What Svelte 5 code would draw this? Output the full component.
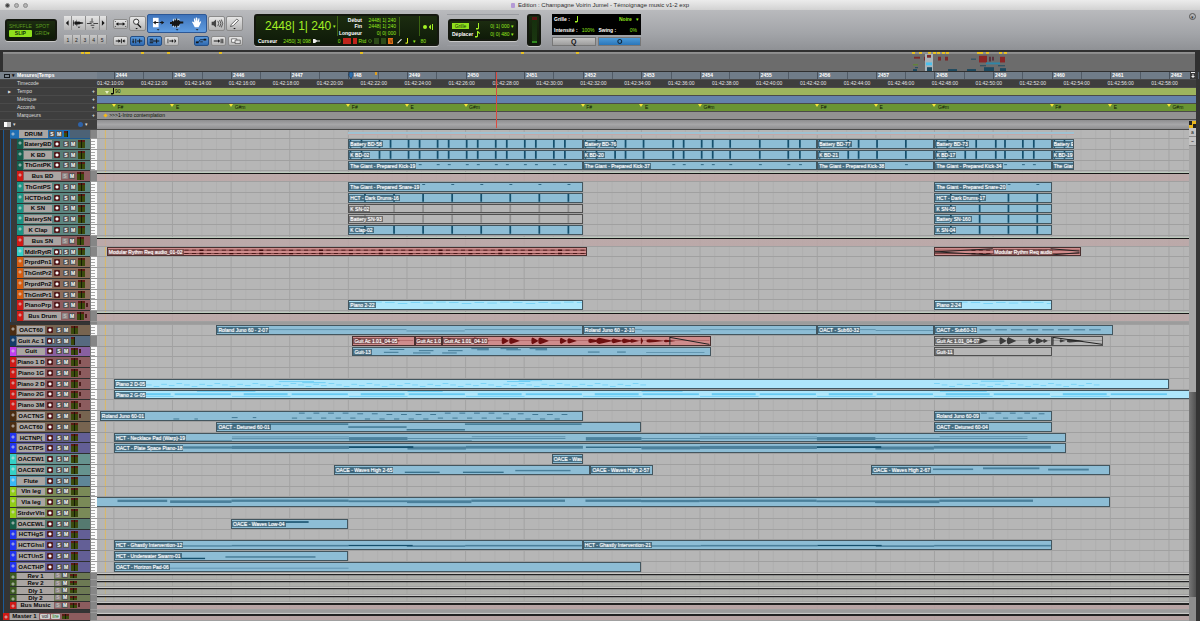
<script>
  // Horizontal positions are counted in bars from bar 2444.
  const FIRST = -0.288;
  const SPAN = 18.63;

  const pct = (bar) => ((bar - FIRST) / SPAN) * 100;

  const bars = Array.from({ length: 19 }, (_, i) => i);
  const timecodes = Array.from({ length: 25 }, (_, i) => 10 + i * 2);
  const quarters = Array.from({ length: 76 }, (_, i) => i - 1);

  const chords = [
    [0, 'F#'], [1, 'E'], [2, 'G#m'], [4, 'F#'], [5, 'E'], [6, 'G#m'], [8, 'F#'], [9, 'E'],
    [10, 'G#m'], [12, 'F#'], [13, 'E'], [14, 'G#m'], [16, 'F#'], [17, 'E'], [18, 'G#m'],
  ];

  const teal = ['#135f4d', '#577c76'];
  const aqua = ['#1b9484', '#5c8680'];
  const cyan = ['#35cfc6', '#66938f'];
  const red = ['#d01a16', '#8c5c5e'];
  const orange = ['#d55c10', '#8a6c5a'];
  const brown = ['#4c2d12', '#776450'];
  const navy = ['#143c68', '#566a80'];
  const violet = ['#c240f0', '#8860a0'];
  const blue = ['#2234f0', '#635f96'];
  const sky = ['#38b8f6', '#5f8698'];
  const lime = ['#92ce18', '#7a8a58'];
  const forest = ['#155f48', '#557a70'];
  const olive = ['#3c5a22', '#6d7a54'];

  const hits = (list, y = 0, h = 10) => list.map((b) => [b, b + (h < 10 ? 0.05 : 0.03), y, h]);

  function every(from, to, offsets) {
    const out = [];
    for (let b = from; b < to; b++) for (const o of offsets) if (b + o < to) out.push(b + o);
    return out;
  }

  const kickA = every(4, 8, [0.01, 0.2, 0.51, 0.7]);
  const kickB = [0.01, 0.2, 0.52, 0.7, 1.01, 1.52, 1.7, 2.01, 2.2, 2.5, 3.01, 3.5, 3.7].map((b) => b + 8);
  const kickC = [12.01, 12.51, 12.69, 13.01, 13.51];
  const kickD = [0.01, 0.2, 0.51, 0.7, 1.04, 1.2, 1.51, 1.7].map((b) => b + 14);
  const kickE = [16.01, 16.2];
  const snareA = every(4, 8, [0.26, 0.76]);
  const snareB = every(14, 16, [0.26, 0.76]);

  const clip = (start, end, name, notes = [], kind = 'midi', extra = {}) =>
    ({ start, end, name, notes, kind, ...extra });

  const kicks = (names, y, h) => [
    clip(4, 8, names[0], hits(kickA, y, h)),
    clip(8, 12, names[1], hits(kickB, y, h)),
    clip(12, 14, names[2], hits(kickC, y, h)),
    clip(14, 16, names[3], hits(kickD, y, h)),
    clip(16, 16.38, names[4], hits(kickE, y, h)),
  ];

  // Small pseudo-random phrase of short notes
  function phrase(from, to, step, base, range) {
    const out = [];
    let i = 0;
    for (let b = from; b < to; b += step) {
      const y = base + ((i * 7) % 5) * (range / 5);
      out.push([b, b + step * 0.75, y, 0.8]);
      i++;
    }
    return out;
  }

  function junoSteps(from, to) {
    const out = [];
    const top = [1, 1, 1, 1, 2, 2, 2.6, 3, 3, 3];
    for (let i = 0; from + i * 0.25 < to; i++) {
      const b = from + i * 0.25;
      out.push([b, b + 0.1, top[i % 10], 0.8], [b - 0.12, b - 0.03, i % 10 < 5 ? 7.4 : 8.6, 0.8]);
    }
    return out;
  }

  const pad = (s) => [
    [s, s + 2, 3.4, 0.8], [s, s + 2, 5.6, 1], [s + 2, s + 3, 4, 4.4], [s + 3, s + 4.1, 5.4, 1],
    [s + 3, s + 4.1, 8, 0.8], [s + 4.1, s + 5.7, 3.2, 0.8], [s + 4.1, s + 5.7, 5.4, 1],
  ];
  const soft = (s) => [
    [s, s + 2, 2.4, 4], [s + 2, s + 3.1, 2.8, 2.4, 1], [s + 3, s + 4, 3.2, 4], [s + 4, s + 6, 2.4, 3.6],
  ];
  const ghost = (s) => [
    [s, s + 2, 5, 2], [s + 2, s + 3.1, 5, 1.6, 1], [s + 3, s + 4, 5.6, 2], [s + 4, s + 6, 5, 2],
  ];
  const viola = (s) => [
    [s, s + 2, 2, 3], [s + 2, s + 3, 3, 2.4], [s + 3, s + 4.1, 3, 3.6], [s + 4.1, s + 5.7, 2, 3],
  ];
  const pianoBands = [[1.4, 2.4, 0.2, 1], [5, 5.6, 0.2, 1], [9, 9.7, 0.2, 1], [14.1, 14.9, 0.2, 1]];
  for (let b = 0; b < 18; b += 2) {
    pianoBands.push([b + 0.2, b + 0.95, 2.8, 2.6], [b + 1.02, b + 1.98, 3, 2.2], [b, b + 1, 6.8, 0.8]);
  }

  const tracks = [
    { type: 'fold', name: 'DRUM' },
    { name: 'BateryBD', c: teal, in: 1, clips: kicks(['Battery BD-58', 'Battery BD-76', 'Battery BD-77', 'Battery BD-73', 'Battery E'], 0, 10) },
    { name: 'K BD', c: teal, in: 1, clips: kicks(['K BD-02', 'K BD-20', 'K BD-21', 'K BD-17', 'K BD-19'], 0, 10) },
    { name: 'ThGntPK', c: teal, in: 1, clips: kicks(['The Giant - Prepared Kick-19', 'The Giant - Prepared Kick-37', 'The Giant - Prepared Kick-38', 'The Giant - Prepared Kick-34', 'The Giar'], 3, 1) },
    { type: 'bus', name: 'Bus BD', c: red, in: 1 },
    { name: 'ThGntPS', c: aqua, in: 1, clips: [clip(4, 8, 'The Giant - Prepared Snare-19', hits(snareA, 1.4, 1)), clip(14, 16, 'The Giant - Prepared Snare-20', hits(snareB, 1.4, 1))] },
    { name: 'HCTDrkD', c: aqua, in: 1, clips: [clip(4, 8, 'HCT - Dark Drums-16', hits(snareA)), clip(14, 16, 'HCT - Dark Drums-17', hits(snareB))] },
    { name: 'K SN', c: aqua, in: 1, clips: [clip(4, 8, 'K SN-02', hits(snareA), 'muted'), clip(14, 16, 'K SN-05', hits(snareB))] },
    { name: 'BaterySN', c: aqua, in: 1, clips: [clip(4, 8, 'Battery SN-93', hits(snareA), 'muted'), clip(14, 16, 'Battery SN-160', hits(snareB))] },
    { name: 'K Clap', c: aqua, in: 1, clips: [clip(4, 8, 'K Clap-02', hits(snareA)), clip(14, 16, 'K SN-04', hits(snareB))] },
    { type: 'bus', name: 'Bus SN', c: red, in: 1 },
    { name: 'MdlrRytR', c: cyan, in: 1, audio: true, clips: [
      clip(-0.12, 8.08, 'Modular Rythm Req audio_01-02', [], 'audio', { loop: [-0.12, 8.08] }),
      clip(14, 16.5, 'Modular Rythm Req audio', [], 'audio', { loop: [14.6, 16.1], cross: true, center: true }),
    ] },
    { name: 'PrprdPn1', c: orange, in: 1 },
    { name: 'ThGntPr2', c: orange, in: 1 },
    { name: 'PrprdPn2', c: orange, in: 1 },
    { name: 'ThGntPr1', c: orange, in: 1 },
    { name: 'PianoPrp', c: red, in: 1, send: true, clips: [clip(4, 8, 'Piano 2-22', phrase(4.4, 8, 0.22, 1, 2), 'bright'), clip(14, 16, 'Piano 2-24', phrase(14.4, 16, 0.22, 1, 2), 'bright')] },
    { type: 'bus', name: 'Bus Drum', c: red, in: 1, send: true },
    { type: 'gap' },
    { name: 'OACT60', c: brown, clips: [
      clip(1.75, 8, 'Roland Juno 60 - 2-07', [[2, 4, 4.4, 0.8], [4, 5, 4.4, 0.8], [5, 6, 6, 0.8], [6, 8, 4.4, 0.8]]),
      clip(8, 12, 'Roland Juno 60 - 2-10', [[8, 9, 4.4, 0.8], [9, 10, 6, 0.8], [10, 12, 4.4, 0.8]]),
      clip(12, 14, 'OACT - Sub60-32', [[12, 13, 4.4, 0.8], [13, 14, 5.6, 0.8]]),
      clip(14, 17.05, 'OACT - Sub60-31', [0, 1, 2, 3, 4, 5, 6, 7, 8].map((i) => [14.5 + i * 0.27, 14.7 + i * 0.27, 4.6, 0.8])),
    ] },
    { name: 'Guit Ac 1', c: navy, audio: true, clips: [
      clip(4.07, 5.13, 'Guit Ac 1.01_04-05', [], 'audio', { bursts: [[4.1, 0.25, 4], [4.6, 0.3, 4]] }),
      clip(5.13, 5.6, 'Guit Ac 1.0', [], 'audio', { bursts: [[5.14, 0.3, 4]] }),
      clip(5.6, 10.18, 'Guit Ac 1.01_04-10', [], 'audio', {
        bursts: [[5.64, 0.3, 4], [6.1, 0.3, 4.4], [6.61, 0.12, 4.4], [6.74, 0.18, 4], [7.12, 0.12, 4.4], [7.24, 0.18, 4.4], [7.61, 0.12, 4], [7.74, 0.16, 3.4], [8.1, 0.2, 2.8], [8.24, 0.28, 4], [8.5, 0.2, 3], [8.68, 0.2, 3], [8.82, 0.15, 2.4], [9.0, 0.04, 4.6], [9.1, 0.3, 2.2], [9.4, 0.2, 1.6]],
        fade: 9.5,
      }),
      clip(14, 16, 'Guit Ac 1.01_04-07', [], 'muted', { bursts: [[14.1, 0.25, 4], [14.62, 0.12, 4], [14.74, 0.18, 4], [15.12, 0.12, 4.6], [15.25, 0.16, 4.6], [15.62, 0.12, 4.2], [15.75, 0.14, 4], [15.88, 0.08, 2.6]] }),
      clip(16, 16.88, '', [], 'muted', { bursts: [[16.12, 0.1, 2], [16.25, 0.3, 2.2]], fade: 16 }),
    ] },
    { name: 'Guit', c: violet, send: true, clips: [
      clip(4.07, 10.18, 'Guit-13', [[4.6, 4.85, 5, 0.8], [4.7, 4.95, 1.6, 0.8], [5.1, 5.4, 6, 0.8], [5.2, 5.45, 3.2, 0.8], [5.6, 5.85, 6, 0.8], [5.7, 5.95, 3.2, 0.8], [6.1, 6.4, 0.6, 0.8], [6.2, 6.4, 2, 0.8], [6.6, 6.9, 0.6, 0.8], [6.7, 6.95, 2, 0.8], [7.1, 7.4, 0.6, 0.8], [7.2, 7.4, 2, 0.8], [8.1, 8.3, 4.8, 0.8], [8.6, 8.75, 4.8, 0.8], [9.1, 10.1, 5.6, 0.8]]),
      clip(14, 16, 'Guit-11', [], 'muted'),
    ] },
    { name: 'Piano 1 D', c: red, send: true },
    { name: 'Piano 1G', c: red, send: true },
    { name: 'Piano 2 D', c: red, send: true, clips: [clip(0, 18, 'Piano 2 D-05', [...phrase(0.4, 9, 0.13, 4, 5), [2.8, 3.4, 1.6, 1], [3.2, 3.6, 3, 1], [6.7, 7.1, 1.4, 1], [6.9, 7.3, 0.6, 0.8], ...phrase(14, 16.8, 0.13, 4, 5), [14.8, 15.2, 1, 1]], 'bright')] },
    { name: 'Piano 2G', c: red, send: true, clips: [clip(0, 18.4, 'Piano 2 G-05', pianoBands, 'bright')] },
    { name: 'Piano 3M', c: red, send: true },
    { name: 'OACTNS', c: brown, send: true, clips: [
      clip(-0.24, 8, 'Roland Juno 60-01', [[1, 1.1, 8.6, 0.8], [1.36, 1.42, 8.6, 0.8], [2, 2.1, 7, 0.8], [2.36, 2.42, 7, 0.8], ...junoSteps(3.15, 7.9)]),
      clip(14, 16, 'Roland Juno 60-09', junoSteps(14.8, 15.9)),
    ] },
    { name: 'OACT60', c: brown, clips: [
      clip(1.75, 9, 'OACT - Detuned 60-01', [[2, 4, 0.8, 1.2, 1], [4, 5, 4.6, 1.2, 1], [5, 6, 8.2, 1.2, 1], [6, 8, 0.8, 1.2, 1]]),
      clip(14, 16, 'OACT - Detuned 60-04', []),
    ] },
    { name: 'HCTNP(', c: blue, clips: [clip(0, 16.25, 'HCT - Necklace Pad (Warp)-19', [[0, 2, 8, 0.8], ...pad(2), [8.05, 9, 4, 4.4], [9, 10, 5.4, 1], [9, 10, 8, 1], ...pad(10).slice(0, 5), [14.1, 15.6, 3.2, 0.8], [14.1, 15.6, 5.4, 1]])] },
    { name: 'OACTPS', c: blue, clips: [clip(0, 16.25, 'OACT - Plate Space Piano-18', [[0, 2, 3, 3], ...soft(2), [8.05, 9, 3.4, 1.4, 1], [9, 10, 3, 4], ...soft(10)])] },
    { name: 'OACEW1', c: cyan, clips: [clip(7.47, 8, 'OACE - Wav', [])] },
    { name: 'OACEW2', c: cyan, clips: [
      clip(3.75, 8.13, 'OACE - Waves High 2-65', [[4, 4.5, 7, 1.2], [4.95, 5.55, 7.4, 1.2, 1], [5.95, 6.65, 7.4, 1.2, 1], [6.85, 7.8, 5, 1.8]]),
      clip(8.13, 9.19, 'OACE - Waves High 2-57', []),
      clip(12.92, 17, 'OACE - Waves High 2-67', [[13.97, 14.66, 3.2, 2], [14.83, 15.8, 1.8, 2.4], [15.95, 16.65, 3.4, 2.4]]),
    ] },
    { name: 'Flute', c: sky },
    { name: 'Vln leg', c: lime },
    { name: 'Vla leg', c: lime, clips: [clip(-0.3, 17, '', [[0.05, 0.9, 2.2, 3], [0.95, 2, 3, 3.4], ...viola(2), [8.05, 9, 2, 3], [9, 10, 2.4, 3], ...viola(10)])] },
    { name: 'StrdvrVln', c: lime },
    { name: 'OACEWL', c: forest, clips: [clip(2, 4, 'OACE - Waves Low-04', [[2.4, 3.33, 1.6, 2, 1]])] },
    { name: 'HCTHgS', c: blue },
    { name: 'HCTGhsl', c: blue, clips: [
      clip(0, 8, 'HCT - Ghastly Intervention-12', [[0, 2, 5.6, 1.6], ...ghost(2)]),
      clip(8, 16, 'HCT - Ghastly Intervention-21', [[8, 10, 5.6, 1.6], ...ghost(10)]),
    ] },
    { name: 'HCTUnS', c: blue, clips: [clip(0, 4, 'HCT - Underwater Swarm-01', [[1, 1.55, 7.4, 1.8, 1], [1.9, 3.45, 5.4, 2]])] },
    { name: 'OACTHP', c: blue, clips: [clip(0, 9, 'OACT - Horizon Pad-06', [[0, 4, 6.2, 0.8]])] },
    { type: 'aux', name: 'Rev 1', c: olive },
    { type: 'aux', name: 'Rev 2', c: olive },
    { type: 'aux', name: 'Dly 1', c: olive },
    { type: 'aux', name: 'Dly 2', c: olive },
    { type: 'aux', name: 'Bus Music', c: red, pink: true, send: true },
    { type: 'gap' },
    { type: 'master', name: 'Master 1', c: red, pink: true },
  ];

  // Row shares of the free height
  const share = { fold: 90, gap: 30, aux: 74, master: 85 };
  const rows = tracks.map((t) => `minmax(0, ${share[t.type] ?? 108}fr)`).join(' ');

  function wavePath(bursts) {
    return bursts
      .map(([s, len, a]) => `M${s} ${5 - a * 0.6}L${s + len * 0.15} ${5 - a}L${s + len * 0.5} ${5 - a * 0.6}L${s + len} 4.8V5.2L${s + len * 0.5} ${5 + a * 0.6}L${s + len * 0.15} ${5 + a}L${s} ${5 + a * 0.6}Z`)
      .join('');
  }

  function loopPath([from, to]) {
    let d = '';
    let i = 0;
    for (let b = from + 0.03; b < to - 0.08; b += 0.128) {
      const a = [1.4, 0.9, 1.1, 0.9, 2, 0.9, 1.1, 0.9][i++ % 8];
      for (const y of [2.8, 7.2]) d += `M${b} ${y - a / 2}h.07v${a}h-.07z`;
    }
    return d;
  }

  let mode = $state('SLIP');

  const overviewDots = [82, 86, 88, 142, 168, 220, 361, 522, 577, 913, 920, 929, 934, 938, 943, 947, 978, 981, 987, 1000, 1005];
  const overviewClips = [
    [914, 5, 6, 2, '#7a2b2b'], [924, 5, 3, 4, '#7a2b2b'], [938, 5, 3, 4, '#7a2b2b'], [945, 5, 3, 4, '#7a2b2b'],
    [913, 13, 5, 1, '#5f8f22'], [915, 16, 3, 1, '#1d4a60'], [913, 18, 4, 2, '#1d4a60'],
    [925, 2, 8, 18, '#a9b3b8'], [927, 3, 4, 3, '#7a2b2b'], [926, 11, 6, 3, '#49c2f0'], [927, 16, 5, 4, '#1d4a60'],
    [948, 18, 9, 2, '#1d4a60'], [967, 18, 9, 2, '#1d4a60'], [971, 7, 5, 1, '#1d4a60'],
    [979, 4, 8, 7, '#8a2727'], [989, 5, 2, 5, '#5a3440'], [992, 5, 2, 4, '#5a3440'], [1000, 5, 5, 6, '#8a2727'],
    [986, 11, 14, 2, '#2e86a8'], [980, 14, 6, 1, '#1d4a60'], [984, 16, 10, 4, '#1d4a60'], [998, 14, 7, 1, '#1d4a60'], [1000, 17, 6, 3, '#1d4a60'],
  ];
</script>

<div class="window">
  <header class="titlebar">
    <span class="lights"><i></i><i></i><i></i></span>
    <span class="title"><i class="doc"></i>Edition : Champagne Voirin Jumel - Témoignage music v1-2 exp</span>
  </header>

  <div class="toolbar">
    <div class="lcd modes">
      {#each ['SHUFFLE', 'SPOT', 'SLIP', 'GRID'] as m}
        <button class:on={mode === m} onclick={() => (mode = m)}>{m}{#if m === 'GRID'}<small> ▾</small>{/if}</button>
      {/each}
    </div>

    <div class="zoom">
      <div class="segs">
        <button class="narrow" aria-label="Zoom out"><svg viewBox="0 0 7 14"><path d="M5 4v6L2 7z" /></svg></button>
        <button aria-label="Zoom audio"><svg viewBox="0 0 14 14"><path d="M1 6.5h2V5h1v1.5L5 3v3l1-1v1l2-1v1l4 .5v1L8 8v1L6 8v2L5 8v3L4 8v1H3V7.500H1zM1 4h.8v6H1zM6 11h3l-1.500 1.500z" /></svg></button>
        <button aria-label="Zoom MIDI"><svg viewBox="0 0 14 14"><path d="M6 2h1v3H6zM4 5.500h4v1H4zM1 7h5v1H1zM8 7h5v1H8zM5 9h4v1H5zM6 11.500h3L7.500 13z" opacity=".75" /></svg></button>
        <button class="narrow" aria-label="Zoom in"><svg viewBox="0 0 7 14"><path d="M2 4v6l3-3z" /></svg></button>
      </div>
      <div class="segs presets">
        {#each [1, 2, 3, 4, 5] as n}<button>{n}</button>{/each}
      </div>
    </div>

    <div class="tools">
      <div class="tool-row">
        <button class="btn small" aria-label="Zoom toggle"><svg viewBox="0 0 15 9"><path d="M2 4.500l3-2v1.500h5V2.500l3 2-3 2V5H5v1.500zM1 1h1v1H1zM13 1h1v1h-1zM1 7h1v1H1zM13 7h1v1h-1z" /></svg></button>
        <button class="btn big" aria-label="Zoomer"><svg viewBox="0 0 17 14"><circle cx="7" cy="5" r="3" fill="#eee" stroke="#222" /><path d="M9 7l4 4-1 1-4-4zM6 12h3l-1.500 1.500z" /></svg></button>
        <div class="smart">
          <button aria-label="Trim"><svg viewBox="0 0 20 18"><path d="M5 3h6v10H5z" fill="#fff" /><path d="M5 8l3-2v1.500h3v1H8V10zM12 7.500h2V6l3 2-3 2V8.500h-2zM9 15h3l-1.500 1.500z" /></svg></button>
          <button aria-label="Select"><svg viewBox="0 0 20 18"><path d="M6 4h7v9H6z" fill="#b9d4ee" /><path d="M3 7.500h2V6l2 1 1-3 1 2 1-3 1 3 1-1 1 1 1 1h3v2h-3l-1 1-1 2-1-1-1 3-1-3-1 2-1-2-2 1V9.500H3zM9 15h3l-1.500 1.500z" /></svg></button>
          <button aria-label="Grab"><svg viewBox="0 0 20 18"><path d="M6 9l-1-1.500 1-.5 1.500 1L7 4l1-.5L9 7V3l1-.3.6.5L11 7l1-3.500 1 .3L12.600 8l1.400-1.500.8.6L13 11l-1 2H8z" fill="#fff" /><path d="M9 15h3l-1.500 1.500z" /></svg></button>
        </div>
        <button class="btn big" aria-label="Scrub"><svg viewBox="0 0 17 14"><path d="M3 5h2l3-2.500v9L5 9H3z" fill="#444" /><path d="M10 4q2 3 0 6M12 3q3 4 0 8M14 2.500q3 4.500 0 9" fill="none" stroke="#444" /></svg></button>
        <button class="btn big" aria-label="Pencil"><svg viewBox="0 0 17 14"><path d="M4 10.500L5 8l6-6 2 1.500-6 6z" fill="#fff" stroke="#333" stroke-width=".8" /><path d="M7 12h3l-1.500 1.500z" /></svg></button>
      </div>
      <div class="tool-row low">
        <button class="btn small" aria-label="Tab to transient"><svg viewBox="0 0 15 9"><path d="M2 4h3V2.500L8 4.500l-3 2V5H2zM8 2h1v5H8zM13 4h-1V2.500L9.500 4.500l2.500 2V5h1z" /></svg></button>
        <button class="btn small active" aria-label="Link timeline"><svg viewBox="0 0 15 9"><path d="M2 2h1v3h1L2.500 7 1 5h1zM5 2h1v5H5zM7 4h6v1H7zM9.500 2h1v5h-1z" /></svg></button>
        <button class="btn small active" aria-label="Link track"><svg viewBox="0 0 15 9"><path d="M2 2h4v1H2zM2 4h11v1H2zM2 6h4v1H2zM9.500 2h1v5h-1z" /></svg></button>
        <button class="btn small" aria-label="Mirror"><svg viewBox="0 0 15 9"><path d="M3 2h.8v5H3zM5 4h3V2.500l2 2-2 2V5H5zM11 2l2 2.500L11 7z" /></svg></button>
        <button class="btn small active push" aria-label="Automation follows"><svg viewBox="0 0 15 9"><path d="M2 6h2l2-3h5" fill="none" stroke="#0b2540" /><path d="M10 2h3v2h-3zM1 5h3v2H1zM6 5h3v1H6z" /></svg></button>
        <button class="btn small" aria-label="Insertion"><svg viewBox="0 0 15 9"><path d="M2 4h6v1H2zM7 2.500l2.500 2L7 6.500zM10 2h1v5h-1zM12 2h1v5h-1z" /></svg></button>
        <button class="btn small" aria-label="Layered"><svg viewBox="0 0 15 9"><path d="M3 2h6v4H3z" fill="#fff" stroke="#333" stroke-width=".7" /><path d="M7 3.500h6v4H7z" fill="#ddd" stroke="#333" stroke-width=".7" /></svg></button>
      </div>
    </div>

    <div class="lcd counter">
      <div class="count-top">
        <div class="main-count">2448| 1| 240<small>▾</small></div>
        <dl>
          <dt>Début</dt><dd>2448| 1| 240</dd>
          <dt>Fin</dt><dd>2448| 1| 240</dd>
          <dt>Longueur</dt><dd>0| 0| 000</dd>
        </dl>
        <div class="blank"></div>
        <div class="io"><svg viewBox="0 0 12 8"><circle cx="3" cy="4" r="2" /><path d="M7 3.500L9 1.500v5L7 4.500zM10 1h1v6h-1z" /></svg></div>
      </div>
      <div class="count-low">
        <b>Curseur</b><span class="cur">2450| 3| 098</span>
        <svg class="pin" viewBox="0 0 7 6"><path d="M0 1h2l2 1.500h3v1H4L2 5H0z" /></svg>
        <span class="zero">0</span>
        <i class="chip r"></i><i class="chip r slim"></i><span>Rtd</span><i class="ring"></i><i class="chip g"></i><i class="chip g"></i><i class="chip o">V</i>
        <svg class="sig" viewBox="0 0 16 6"><path d="M2 5L6 1l1 .6L3 5.600z" fill="#eee" /><path d="M12 0h1v5l-1 .8h-1.500V4.400H12z" /></svg>
        <span>▾</span><span class="vel">80</span>
      </div>
    </div>

    <div class="nudge">
      <div class="lcd nudge-box">
        <button class="lit">Grille</button><svg class="q" viewBox="0 0 5 7"><path d="M3 0h1v5.500L3 6.500H1V5h2z" /></svg><output>0| 1| 000 ▾</output>
        <b>Déplacer</b><svg class="q" viewBox="0 0 5 7"><path d="M2 0h1l2 2v1L3 2v3.500L2 6.500H0V5h2z" /></svg><output>0| 0| 480 ▾</output>
      </div>
    </div>

    <div class="lcd meter"><i></i></div>

    <div class="quant">
      <div class="black">
        <div><label for="grid-value">Grille :</label><svg class="q" viewBox="0 0 5 7"><path d="M3 0h1v5.500L3 6.500H1V5h2z" /></svg><select id="grid-value"><option>Noire</option></select><small>▾</small></div>
        <div><b>Intensité :</b><em>100%</em><b>Swing :</b><em class="end">0%</em></div>
      </div>
      <div class="pair">
        <button>Q</button>
        <button class="blue" aria-label="Groove"><svg viewBox="0 0 10 8"><circle cx="5" cy="4" r="2.200" fill="none" stroke="#10283c" stroke-width="1.200" /></svg></button>
      </div>
    </div>
    <button class="more" aria-label="Toolbar menu">▾</button>
  </div>

  <div class="overview">
    <svg viewBox="0 0 1192 20" preserveAspectRatio="none">
      <rect width="1192" height="2" fill="#909090" />
      {#each overviewDots as x}<rect x={x - 4} y="0" width="3" height="2" fill="#ecc320" />{/each}
      {#each overviewClips as [x, y, w, h, f]}<rect x={x - 3} {y} width={w} height={h} fill={f} />{/each}
    </svg>
  </div>

  <div class="rulers">
    <div class="ruler mesures">
      <div class="rname"><i class="box"></i><small>▾</small><span>Mesures|Temps</span></div>
      <div class="rlane">
        {#each bars as b}
          <span class="bar" style="left: {pct(b)}%">{2444 + b}</span>
          <i class="half" style="left: {pct(b + 0.5)}%"></i>
        {/each}
        <svg class="head" viewBox="0 0 6 8" style="left: {pct(4)}%"><path d="M1 0h4v3h1L3 8 0 3h1z" fill="#2f6fae" stroke="#12304c" stroke-width=".6" /></svg>
        <i class="flag" style="left: {pct(4.45)}%"></i>
      </div>
      <span class="tail"><svg viewBox="0 0 6 7"><path d="M1 0h4v1H1zM2.500 2h1v2h1.500L3 6 1 4h1.500z" fill="#eee" /></svg></span>
    </div>
    <div class="ruler time">
      <div class="rname"><span>Timecode</span></div>
      <div class="rlane">
        {#each timecodes as s}<span style="left: {((s - 10) / 2) * 4.023}%">01:42:{s}:00</span>{/each}
      </div>
    </div>
    <div class="ruler tempo">
      <div class="rname"><small class="tri">▶</small><span>Tempo</span><b>+</b></div>
      <div class="rlane"><i class="tri-dn pale" style="left: {pct(-0.12)}%"></i><svg class="q" viewBox="0 0 5 7" style="left: {pct(-0.06)}%"><path d="M3 0h1v5.500L3 6.500H1V5h2z" /></svg><span style="left: {pct(0.02)}%">90</span></div>
    </div>
    <div class="ruler metrique">
      <div class="rname"><span>Métrique</span><b>+</b></div>
      <div class="rlane"></div>
    </div>
    <div class="ruler accords">
      <div class="rname"><span>Accords</span><b>+</b></div>
      <div class="rlane">
        {#each chords as [b, name]}
          <i class="tri-dn" style="left: {pct(b)}%"></i><span style="left: {pct(b + 0.06)}%">{name}</span>
        {/each}
      </div>
    </div>
    <div class="ruler marqueurs">
      <div class="rname"><span>Marqueurs</span><b>+</b></div>
      <div class="rlane"><i class="dia" style="left: {pct(-0.16)}%"></i><span style="left: {pct(-0.08)}%">&gt;&gt;&gt;1-Intro contemplation</span></div>
    </div>
    <div class="listhead">
      <div class="rname"><i class="list"></i><small>▾</small><i class="dot"></i><small>▾</small></div>
      <div class="rlane"></div>
    </div>
    <div class="cursor-layer"><i style="left: {pct(6.525)}%"></i></div>
  </div>

  <main class="edit">
    <div class="tracks" style="grid-template-rows: {rows}">
      <svg class="grid" viewBox="{FIRST} 0 {SPAN} 1" preserveAspectRatio="none">
        {#each quarters as q}
          <path d="M{q / 4} 0V1" stroke={q % 4 === 0 ? '#a3a3a3' : '#b0b0b0'} vector-effect="non-scaling-stroke" />
        {/each}
        <path d="M-.145 0V1" stroke="#dcb964" vector-effect="non-scaling-stroke" />
      </svg>
      {#each tracks as t}
        <div class="track {t.type ?? 'inst'}" class:nested={t.in}>
          <div class="head-cell">
            {#if t.type === 'fold'}
              <div class="strip fold-strip">
                <i class="tag"></i><span class="name">{t.name}</span><button>S</button><button>M</button><i class="vu mono"></i>
              </div>
            {:else if t.type !== 'gap'}
              <div class="strip" style="--tag: {t.c[0]}; --tint: {t.c[1]}">
                <i class="tag"></i>
                <span class="name">{t.name}</span>
                {#if t.type === 'master'}
                  <button class="auto">vol</button><button class="auto green">lire</button>
                {:else}
                  {#if !t.type}<button class="rec" class:tight={t.audio} aria-label="Record {t.name}"></button>{/if}
                  {#if t.audio}<button class="input">I</button>{/if}
                  <button class:dim={t.type}>S</button><button>M</button>
                {/if}
                <i class="vu" class:mono={t.name === 'Guit Ac 1'}></i>
                {#if t.send}<i class="snd"></i>{/if}
              </div>
            {/if}
            <i class="keys" class:plain={t.type || t.audio}></i>
          </div>
          <div class="lane" class:pink={t.pink || t.type === 'bus'}>
            {#if t.type === 'fold'}
              <i class="sum" style="left: {pct(4)}%; width: {(12.38 / SPAN) * 100}%"></i>
            {/if}
            {#each t.clips ?? [] as c}
              <div class="clip {c.kind}" style="left: {pct(c.start)}%; width: {((c.end - c.start) / SPAN) * 100}%">
                <svg viewBox="{c.start} 0 {c.end - c.start} 10" preserveAspectRatio="none">
                  {#each c.notes as [s, e, y, h, strong]}
                    <rect x={s} {y} width={e - s} height={h} class:soft={!strong && e - s > 0.6} />
                  {/each}
                  {#if c.bursts}<path d={wavePath(c.bursts) + `M${c.start} 4.8H${c.end}V5.200H${c.start}z`} />{/if}
                  {#if c.loop}<path class="loop" d={loopPath(c.loop)} /><path class="loop faint" d={`M${c.start} 2.4H${c.end}v.8H${c.start}zM${c.start} 6.800H${c.end}v.8H${c.start}z`} />{/if}
                  {#if c.fade}<path class="line" d="M{c.fade} 0.500L{c.end} 9.500M{c.fade} 0V10" />{/if}
                  {#if c.cross}<path class="line" d="M14 5L15 1M14 5L15 9M16 1L16.500 4M16 9L16.500 6" />{/if}
                </svg>
                {#if c.name}<span class="label" class:center={c.center}>{c.name}</span>{/if}
              </div>
            {/each}
          </div>
        </div>
      {/each}
    </div>
    <div class="scroll">
      <i class="gold"></i><button aria-label="Keyboard focus">a</button><button aria-label="Lane tools">~</button>
      <div class="rail"></div><div class="thumb"></div><div class="rail foot"></div>
    </div>
  </main>
</div>

<style>
  :global(body) {
    margin: 0;
    background: #343434;
  }

  .window {
    display: flex;
    flex-direction: column;
    height: 100vh;
    overflow: hidden;
    font: 5px/8px 'Liberation Sans', Arial, sans-serif;
    color: #e4e4e4;
    background: #343434;
    --edge: 4px;
    --bar: 7px;
    --head: 97px;
  }

  button,
  select {
    font: inherit;
    color: inherit;
    border: 0;
    padding: 0;
    margin: 0;
    background: none;
    appearance: none;
  }

  i,
  em {
    font-style: normal;
  }

  small {
    font-size: 5px;
  }

  .titlebar {
    display: flex;
    align-items: center;
    justify-content: center;
    position: relative;
    height: 10px;
    flex: none;
    background: linear-gradient(#ececec, #d2d2d2);
    color: #2c2c2c;
    font-size: 6px;
  }

  .title {
    display: flex;
    align-items: center;
    gap: 3px;
  }

  .doc {
    width: 4px;
    height: 5px;
    background: #b49ad6;
    border-radius: 1px;
  }

  .lights {
    position: absolute;
    left: 5px;
    display: flex;
    gap: 4px;
  }

  .lights i {
    width: 5px;
    height: 5px;
    border-radius: 50%;
    background: #b4b4b4;
    border: 1px solid #8e8e8e;
    box-sizing: border-box;
  }

  .lights i:first-child {
    background: #444;
  }

  .toolbar {
    display: flex;
    align-items: center;
    height: 40px;
    flex: none;
    padding: 0 5px;
    background: linear-gradient(#b9babd, #a2a4a8 60%, #8f9195);
    box-sizing: border-box;
    position: relative;
  }

  .lcd {
    background: linear-gradient(#1c2c10, #0e1a08);
    border: 2px solid #14180f;
    border-radius: 3px;
    box-sizing: border-box;
    color: #94e81c;
    box-shadow: 0 1px 0 #c8c8c8;
  }

  .modes {
    display: grid;
    grid-template-columns: 1fr 1fr;
    align-items: center;
    width: 52px;
    height: 22px;
    padding: 2px;
  }

  .modes button {
    color: #5c9c20;
    height: 7px;
    line-height: 7px;
    font-size: 5px;
    border-radius: 1px;
  }

  .modes button.on {
    background: #8fe01c;
    color: #12300a;
    font-weight: bold;
  }

  .zoom {
    margin-left: 7px;
    display: grid;
    gap: 5px;
    width: 43px;
  }

  .segs {
    display: flex;
    height: 14px;
  }

  .segs button {
    flex: 2;
    background: linear-gradient(#e4e4e4, #b4b4b4);
    border-right: 1px solid #909090;
    color: #222;
  }

  .segs button.narrow {
    flex: 1;
  }

  .presets {
    height: 9px;
  }

  .presets button {
    flex: 1;
    background: linear-gradient(#c8c8c8, #a4a4a4);
  }

  .toolbar svg {
    display: block;
    width: 100%;
    height: 100%;
    fill: #161616;
  }

  .tools {
    margin-left: 6px;
    width: 130px;
  }

  .tool-row {
    display: flex;
    align-items: center;
    justify-content: space-between;
  }

  .tool-row.low {
    margin-top: 3px;
    justify-content: flex-start;
    gap: 2px;
  }

  .btn {
    background: linear-gradient(#e6e6e6, #b6b6b6);
    border: 1px solid #8b8b8b;
    border-radius: 2px;
    box-sizing: border-box;
  }

  .btn.small {
    width: 15px;
    height: 10px;
  }

  .btn.big {
    width: 17px;
    height: 15px;
  }

  .btn.active {
    background: linear-gradient(#5c9ada, #2f69b0);
    border-color: #234f88;
  }

  .push {
    margin-left: auto;
  }

  .smart {
    display: flex;
    width: 60px;
    height: 19px;
    background: linear-gradient(#3f74bb, #5f9ce0);
    border: 1px solid #2d5896;
    border-radius: 2px;
    box-sizing: border-box;
  }

  .smart button {
    flex: 1;
  }

  .counter {
    margin-left: 11px;
    width: 185px;
    height: 32px;
    padding: 0 2px;
    line-height: 6px;
  }

  .count-top {
    display: flex;
    height: 20px;
    align-items: stretch;
  }

  .main-count {
    width: 80px;
    font-size: 12px;
    line-height: 21px;
    padding-left: 7px;
    box-sizing: border-box;
    border-right: 1px solid #3c6412;
    color: #a2f024;
    white-space: nowrap;
  }

  .main-count small {
    margin-left: 2px;
    vertical-align: 2px;
  }

  .counter dl {
    display: grid;
    grid-template-columns: 24px 1fr;
    width: 62px;
    margin: 1px 0 0;
    text-align: right;
    border-right: 1px solid #3c6412;
    padding-right: 3px;
    box-sizing: border-box;
    white-space: nowrap;
  }

  dt {
    color: #fff;
    font-weight: bold;
  }

  dd {
    margin: 0;
  }

  .blank {
    width: 19px;
    border-right: 1px solid #3c6412;
  }

  .io {
    width: 12px;
    height: 8px;
    margin: 7px 0 0 2px;
  }

  .toolbar .io svg,
  .toolbar .q {
    fill: #a2f024;
  }

  .toolbar .q {
    width: 5px;
    height: 7px;
  }

  .count-low {
    display: flex;
    align-items: center;
    gap: 2px;
    height: 7px;
    margin-top: 1px;
    white-space: nowrap;
  }

  .count-low b,
  .nudge b,
  .quant b {
    color: #fff;
  }

  .cur {
    margin-left: 4px;
  }

  .toolbar .pin {
    width: 7px;
    height: 6px;
    fill: #eee;
  }

  .toolbar .sig {
    width: 16px;
    height: 6px;
    fill: #dcf020;
  }

  .zero {
    margin-left: 16px;
  }

  .chip {
    width: 5px;
    height: 6px;
    background: #2c4a18;
    font-size: 5px;
    text-align: center;
  }

  .chip.r {
    background: #c0241c;
    width: 8px;
  }

  .chip.r.slim {
    width: 4px;
  }

  .chip.o {
    background: #e0701a;
    color: #4a2206;
  }

  .ring {
    width: 4px;
    height: 4px;
    border: 1px solid #3c6a1a;
    border-radius: 50%;
    box-sizing: border-box;
  }

  .vel {
    margin-left: 2px;
  }

  .nudge {
    margin-left: 8px;
    padding: 4px 0;
    width: 72px;
    border: 1px solid #999ba0;
    border-width: 1px 0;
    display: flex;
    justify-content: center;
  }

  .nudge-box {
    width: 70px;
    height: 22px;
    display: grid;
    grid-template-columns: 23px 5px 1fr;
    align-items: center;
    padding: 1px 2px;
    white-space: nowrap;
  }

  .nudge-box output {
    text-align: right;
  }

  .lit {
    background: #8fe01c;
    color: #12300a;
    height: 6px;
    width: 17px;
    line-height: 6px;
  }

  .meter {
    margin-left: 8px;
    width: 14px;
    height: 32px;
    display: flex;
    justify-content: center;
  }

  .meter i {
    width: 5px;
    margin: 1px 0;
    background: linear-gradient(#5a1414 3px, #16300e 3px, #1a3610 92%, #2f8a1c 92%);
  }

  .quant {
    margin-left: 11px;
    width: 89px;
  }

  .black {
    background: #000;
    height: 21px;
    padding: 0 2px;
    color: #94e81c;
    display: grid;
    align-content: space-around;
  }

  .black div {
    display: flex;
    align-items: center;
    gap: 4px;
    white-space: nowrap;
  }

  .black label {
    color: #fff;
    font-weight: bold;
  }

  .black select {
    margin-left: auto;
    font-weight: bold;
    line-height: 8px;
  }

  .black em.end {
    margin-left: auto;
    padding-right: 2px;
  }

  .pair {
    display: flex;
    gap: 2px;
    margin-top: 2px;
  }

  .pair button {
    flex: 1;
    height: 9px;
    background: linear-gradient(#c4c4c4, #9c9c9c);
    border: 1px solid #777;
    box-sizing: border-box;
    color: #111;
    font-size: 7px;
    font-weight: bold;
    line-height: 7px;
  }

  .pair .blue {
    background: linear-gradient(#4c9ad8, #2a76ba);
  }

  .more {
    position: absolute;
    right: 4px;
    top: 3px;
    width: 7px;
    height: 7px;
    line-height: 6px;
    border: 1px solid #555;
    border-radius: 50%;
    color: #333;
    box-sizing: border-box;
  }

  .overview {
    flex: none;
    height: 22px;
    padding: 2px 5px 1px 3px;
    box-sizing: border-box;
    background: #303030;
  }

  .overview svg {
    display: block;
    width: 100%;
    height: 19px;
    background: #6c6c6c;
  }

  .rulers {
    flex: none;
    position: relative;
    margin-right: var(--edge);
  }

  .ruler,
  .listhead {
    display: flex;
    height: 8px;
    box-sizing: border-box;
    border-bottom: 1px solid #4a4a4a;
    padding-right: var(--bar);
    position: relative;
  }

  .rname {
    width: var(--head);
    flex: none;
    display: flex;
    align-items: center;
    background: #3e3e3e;
    color: #dcdcdc;
    box-sizing: border-box;
    padding: 0 2px 0 17px;
    position: relative;
    line-height: 7px;
  }

  .rname b {
    margin-left: auto;
  }

  .rname .box,
  .rname small {
    position: absolute;
    left: 4px;
  }

  .rname .box {
    width: 6px;
    height: 4px;
    border: 1px solid #15191d;
    box-sizing: border-box;
  }

  .rname .box + small {
    left: 12px;
    color: #111;
  }

  .rname .tri {
    left: 8px;
    font-size: 4px;
  }

  .rlane {
    flex: 1;
    position: relative;
    line-height: 7px;
  }

  .rlane > * {
    position: absolute;
    top: 0;
    white-space: nowrap;
  }

  .rlane .q {
    width: 5px;
    height: 7px;
  }

  .mesures {
    background: #707c88;
    font-weight: bold;
  }

  .mesures .rname {
    background: #7a838d;
    color: #fff;
  }

  .bar {
    border-left: 1px solid #49525c;
    padding-left: 1px;
    color: #fff;
  }

  .half {
    width: 1px;
    height: 7px;
    background: #515b66;
  }

  .head {
    width: 6px;
    height: 7px;
  }

  .flag {
    width: 2px;
    height: 3px;
    background: #e0a020;
  }

  .tail {
    position: absolute;
    right: 0;
    width: 6px;
    height: 7px;
    background: #3a3a3a;
  }

  .tail svg {
    display: block;
    width: 6px;
    height: 7px;
  }

  .time {
    background: #3e3e3e;
    overflow: hidden;
  }

  .tempo {
    background: #9db45e;
  }

  .metrique {
    background: #6481ab;
  }

  .accords {
    background: #6a9433;
  }

  .marqueurs {
    background: #929292;
  }

  .tempo .rlane,
  .accords .rlane,
  .marqueurs .rlane {
    color: #0c1404;
    overflow: hidden;
  }

  .tri-dn {
    width: 0;
    height: 0;
    border: 2px solid transparent;
    border-top: 3px solid #f4e63a;
    margin-left: -2px;
  }

  .rlane .pale {
    top: 3px;
    border-top-color: #e8f0c4;
  }

  .dia {
    width: 3px;
    height: 3px;
    margin: 2px 0 0 -1px;
    background: #f6b814;
    transform: rotate(45deg);
  }

  .listhead {
    height: 10px;
    background: linear-gradient(#8e8e90, #a6a6a8 50%, #8e8e90);
  }

  .listhead .rname {
    gap: 2px;
    padding-left: 4px;
  }

  .listhead .rname small {
    position: static;
  }

  .list {
    width: 7px;
    height: 5px;
    background: linear-gradient(90deg, #fff 3px, #bbb 3px);
  }

  .dot {
    width: 5px;
    height: 5px;
    border-radius: 50%;
    background: #2e62a8;
    margin-left: 60px;
  }

  .cursor-layer {
    position: absolute;
    left: var(--head);
    right: var(--bar);
    top: 0;
    bottom: 2px;
    pointer-events: none;
  }

  .cursor-layer i {
    position: absolute;
    top: 0;
    bottom: 0;
    width: 1px;
    background: #dc4a40;
  }

  .edit {
    flex: 1;
    min-height: 0;
    display: flex;
    margin-right: var(--edge);
  }

  .tracks {
    flex: 1;
    display: grid;
    position: relative;
    background: #b6b6b6;
  }

  .grid {
    position: absolute;
    left: var(--head);
    top: 0;
    width: calc(100% - var(--head));
    height: 100%;
  }

  .track {
    display: flex;
    min-height: 0;
    position: relative;
  }

  .head-cell {
    width: var(--head);
    flex: none;
    display: flex;
    background: linear-gradient(90deg, #2c2c2c 3px, #1d5a96 3px 4px, #343434 4px);
    padding-left: 10px;
    box-sizing: border-box;
  }

  .nested .head-cell {
    padding-left: 17px;
    background: linear-gradient(90deg, #2c2c2c 3px, #1d5a96 3px 4px, #343434 4px 10px, #2368a8 10px 11px, #3a3a3a 11px);
  }

  .master .head-cell {
    padding-left: 3px;
  }

  .gap .head-cell {
    justify-content: flex-end;
  }

  .strip {
    flex: 1;
    display: flex;
    align-items: center;
    background: var(--tint);
    border-bottom: 1px solid #2e3030;
    min-width: 0;
    overflow: hidden;
    color: #eee;
  }

  .fold-strip {
    background: linear-gradient(90deg, #1f6fb4 60px, #4c6276 60px);
    border-bottom-color: #1f5a90;
  }

  .tag {
    width: 6px;
    align-self: stretch;
    background: radial-gradient(circle at 3px 4px, #ddd9 1px, transparent 2px) var(--tag, #1f6fb4);
    margin-right: 1px;
    flex: none;
  }

  .name {
    width: 28px;
    align-self: stretch;
    display: flex;
    align-items: center;
    justify-content: center;
    background: #aaa5a2;
    color: #080808;
    font-size: 6px;
    font-weight: bold;
    line-height: 8px;
    white-space: nowrap;
    margin: 1px 2px 1px 0;
    flex: none;
  }

  .bus .name,
  .aux .name {
    width: 37px;
    margin-right: 1px;
  }

  .aux .name {
    margin: 0 1px 0 0;
    line-height: 6px;
  }

  .fold .name,
  .master .name {
    width: 29px;
    margin: 0 8px 0 0;
  }

  .fold .name {
    margin-left: 2px;
    margin-right: 1px;
  }

  .master .name {
    margin-right: 1px;
  }

  .strip button {
    width: 6px;
    height: 6px;
    line-height: 6px;
    font-size: 5px;
    font-weight: bold;
    background: #555;
    color: #fff;
    border-radius: 1px;
    flex: none;
    margin-right: 1px;
  }

  .aux .strip button,
  .master .strip button {
    height: 5px;
    line-height: 5px;
  }

  .strip button.dim {
    background: #8d8684;
    color: #c4bcba;
  }

  .strip .rec {
    width: 6px;
    background: radial-gradient(circle, #fff 1px, #521a1c 2px);
    margin-right: 3px;
  }

  .strip .rec.tight {
    width: 5px;
    margin-right: 0;
  }

  .strip .input {
    width: 3px;
  }

  .strip .auto {
    width: 10px;
    background: #d0d0d0;
    color: #222;
    font-weight: normal;
  }

  .strip .green {
    color: #1d7a1d;
    width: 9px;
  }

  .vu {
    width: 7px;
    margin: 1px 0 1px 1px;
    align-self: stretch;
    background: linear-gradient(90deg, transparent 3px, #171a08 3px 4px, transparent 4px), linear-gradient(#5c1c14 2px, #3a4a0c 2px);
    flex: none;
  }

  .vu.mono {
    width: 4px;
  }

  .snd {
    width: 2px;
    height: 4px;
    background: #4a1c1c;
    margin-left: 1px;
  }

  .keys {
    width: 7px;
    flex: none;
    background: linear-gradient(90deg, transparent 4px, #fbfbfb 4px), repeating-linear-gradient(#fbfbfb 0 2px, #a8a8a8 2px 3px);
    border-left: 1px solid #777;
    box-sizing: border-box;
    border-bottom: 1px solid #9a9a9a;
  }

  .keys.plain {
    background: #868686;
  }

  .lane {
    flex: 1;
    position: relative;
    border-bottom: 1px solid #a0a0a0;
    overflow: hidden;
  }

  .gap .lane {
    background: #9c9c9c;
  }

  .bus .lane.pink {
    background: linear-gradient(transparent 1px, #bccabc 1px 2px, #161616 2px 3px, #bda6a6cc 3px);
  }

  .aux .lane {
    background: linear-gradient(#c8c8c6 1px, #222 1px 2px, #55555566 2px 3px, #a8aaa288 3px);
  }

  .aux .lane.pink,
  .master .lane.pink {
    background: linear-gradient(#c8c8c6 1px, #222 1px 3px, #b8a2a2e0 3px);
  }

  .sum {
    position: absolute;
    top: 2px;
    height: 2px;
    background: #9fc2d2;
    border-bottom: 1px solid #c4a8a8;
  }

  .clip {
    position: absolute;
    top: 0;
    bottom: 0;
    border: 1px solid #43565f;
    box-sizing: border-box;
    background: #8dbdd5;
    overflow: hidden;
    --ink: #154f6c;
    --tagbg: #335a6e;
  }

  .clip.muted {
    background: #b6b6b6;
    border-color: #505050;
    --ink: #8e8e8e;
    --tagbg: #5a5a5a;
  }

  .clip.bright {
    background: #aee6fb;
    --ink: #5fc8f2;
  }

  .clip.audio {
    background: #cf8c8c;
    border-color: #4a3030;
    --ink: #6e1010;
    --tagbg: #704444;
  }

  .clip svg {
    position: absolute;
    inset: 0;
    width: 100%;
    height: 100%;
  }

  .clip rect,
  .clip path {
    fill: var(--ink);
  }

  .clip.muted path {
    fill: #3c3c3c;
  }

  .clip rect.soft {
    opacity: 0.55;
  }

  .clip.bright rect.soft {
    opacity: 0.9;
  }

  .clip .loop {
    fill: #3c0c0c;
  }

  .clip .faint {
    opacity: 0.7;
  }

  .clip .line,
  .clip.muted .line {
    fill: none;
    stroke: #222;
    vector-effect: non-scaling-stroke;
  }

  .label {
    position: absolute;
    left: 0;
    top: 1px;
    padding: 0 1px;
    height: 6px;
    line-height: 6px;
    background: color-mix(in srgb, var(--tagbg) 80%, transparent);
    color: #fff;
    text-shadow: 0 0 1px #fff;
    white-space: nowrap;
  }

  .label.center {
    left: 40%;
  }

  .scroll {
    width: var(--bar);
    flex: none;
    display: flex;
    flex-direction: column;
    background: #a2a2a2;
    margin-top: -9px;
    position: relative;
  }

  .gold {
    height: 7px;
    background: conic-gradient(#e8b820 25%, #222 25% 50%, #e8b820 50% 75%, #222 75%);
  }

  .scroll button {
    height: 9px;
    background: #c4c4c4;
    border-bottom: 1px solid #888;
    color: #222;
  }

  .rail {
    flex: 245;
    background: #a6a6a6;
  }

  .thumb {
    flex: 204;
    background: linear-gradient(90deg, #777, #505050);
  }

  .rail.foot {
    flex: 24;
    background: #8e8e8e;
  }
</style>
